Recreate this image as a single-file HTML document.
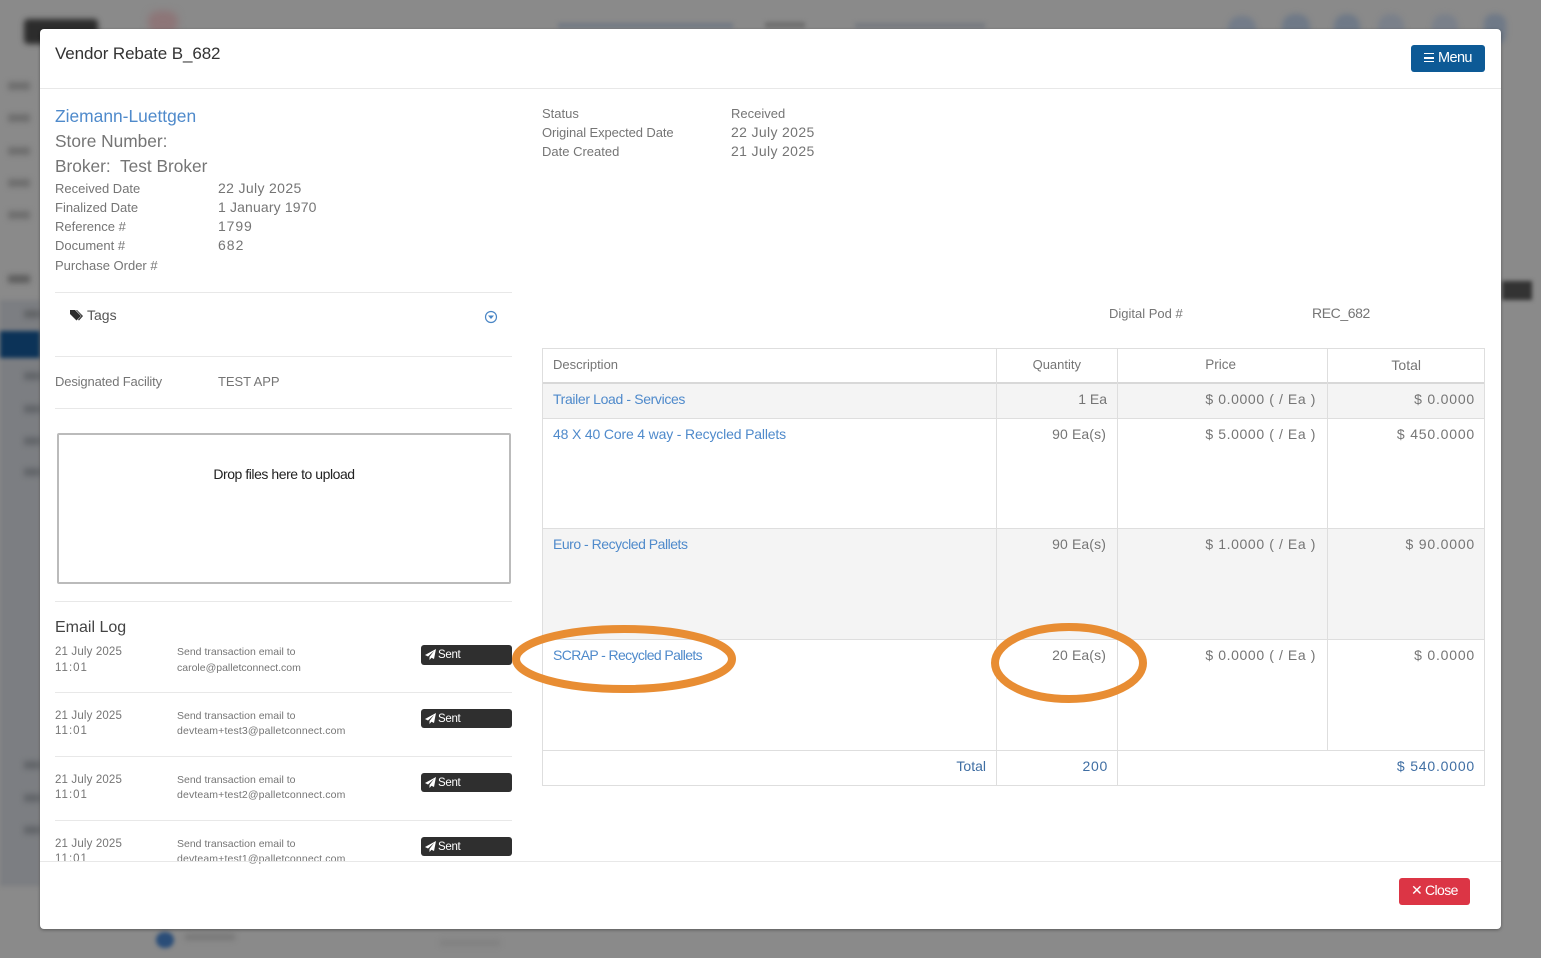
<!DOCTYPE html>
<html><head><meta charset="utf-8"><title>Vendor Rebate B_682</title>
<style>
html,body{margin:0;padding:0}
body{width:1541px;height:958px;overflow:hidden;position:relative;background:#8a8a8a;font-family:"Liberation Sans",sans-serif}
.b{position:absolute;filter:blur(3px)}
.modal{position:absolute;left:40px;top:29px;width:1461px;height:900px;background:#fff;border-radius:4px;overflow:hidden;box-shadow:0 1px 3px rgba(0,0,0,.35)}
.t{position:absolute;white-space:nowrap;line-height:18px;font-size:14px;color:#757575;transform:translateY(-50%)}
.r{transform:translate(-100%,-50%)}
.l{color:#4f8acb}
.h{position:absolute;height:1px;background:#e8e8e8}
.v{position:absolute;width:1px;background:#dedede}
.s{font-size:13px;transform:translateY(calc(-50% + 2px))}
.n{letter-spacing:.35px}
.d{font-size:11.5px;letter-spacing:.15px;transform:translateY(calc(-50% + 2px))}
.c{font-size:11.5px;letter-spacing:1px;transform:translateY(calc(-50% + 2px))}
.x{font-size:10.5px;letter-spacing:0;transform:translateY(calc(-50% + 2px))}
.m{font-size:10.5px;letter-spacing:.13px;transform:translateY(calc(-50% + 2px))}
.p{letter-spacing:.6px}
.a{letter-spacing:.8px}
.sent{position:absolute;left:381px;width:91px;height:19px;background:#2f2f2f;border-radius:3px;color:#fff;font-size:11.5px;line-height:19px}
.sent svg{position:absolute;left:4px;top:4px}
.sent span{position:absolute;left:17px;top:1px;letter-spacing:-.3px}
</style></head>
<body>
<div class="b" style="left:0;top:300px;width:40px;height:586px;background:#7c7e82;filter:blur(2px)"></div>
<div class="b" style="left:0;top:331px;width:40px;height:27px;background:#0c3358;filter:blur(2px)"></div>
<div class="b" style="left:24px;top:19px;width:74px;height:25px;background:#2c2c2c;border-radius:4px"></div>
<div class="b" style="left:148px;top:11px;width:30px;height:22px;background:#8d7577;border-radius:10px;filter:blur(4px)"></div>
<div class="b" style="left:558px;top:23px;width:175px;height:5px;background:#727984;filter:blur(2px)"></div>
<div class="b" style="left:765px;top:22px;width:40px;height:6px;background:#6f6f6f;filter:blur(2px)"></div>
<div class="b" style="left:855px;top:23px;width:130px;height:5px;background:#767a80;filter:blur(2px)"></div>
<div class="b" style="left:1228px;top:16px;width:28px;height:16px;background:#737c89;border-radius:12px 12px 0 0"></div>
<div class="b" style="left:1282px;top:14px;width:28px;height:18px;background:#6f7987;border-radius:12px 12px 0 0"></div>
<div class="b" style="left:1334px;top:14px;width:26px;height:18px;background:#6f7987;border-radius:12px 12px 0 0"></div>
<div class="b" style="left:1378px;top:14px;width:26px;height:18px;background:#7a808a;border-radius:12px 12px 0 0"></div>
<div class="b" style="left:1432px;top:14px;width:26px;height:18px;background:#7a808a;border-radius:12px 12px 0 0"></div>
<div class="b" style="left:1484px;top:14px;width:22px;height:30px;background:#6f7987;border-radius:9px"></div>
<div class="b" style="left:1502px;top:281px;width:30px;height:19px;background:#333;filter:blur(2px)"></div>
<div class="b" style="left:8px;top:82px;width:22px;height:8px;background:#6e6e6e"></div>
<div class="b" style="left:8px;top:114px;width:22px;height:8px;background:#6e6e6e"></div>
<div class="b" style="left:8px;top:147px;width:22px;height:8px;background:#6e6e6e"></div>
<div class="b" style="left:8px;top:179px;width:22px;height:8px;background:#6e6e6e"></div>
<div class="b" style="left:8px;top:211px;width:22px;height:8px;background:#6e6e6e"></div>
<div class="b" style="left:8px;top:275px;width:22px;height:8px;background:#5e5e5e"></div>
<div class="b" style="left:24px;top:310px;width:16px;height:8px;background:#626467"></div>
<div class="b" style="left:24px;top:372px;width:16px;height:8px;background:#626569"></div>
<div class="b" style="left:24px;top:405px;width:16px;height:8px;background:#626569"></div>
<div class="b" style="left:24px;top:437px;width:16px;height:8px;background:#626569"></div>
<div class="b" style="left:24px;top:468px;width:16px;height:8px;background:#626569"></div>
<div class="b" style="left:24px;top:761px;width:16px;height:8px;background:#626569"></div>
<div class="b" style="left:24px;top:794px;width:16px;height:8px;background:#626569"></div>
<div class="b" style="left:24px;top:826px;width:16px;height:8px;background:#626569"></div>
<div class="b" style="left:156px;top:932px;width:18px;height:16px;background:#2a4d78;border-radius:9px;filter:blur(2px)"></div>
<div class="b" style="left:185px;top:934px;width:50px;height:6px;background:#777"></div>
<div class="b" style="left:440px;top:940px;width:60px;height:6px;background:#808080"></div>

<div class="modal">
  <div class="t" style="left:15px;top:25px;font-size:17px;letter-spacing:-.1px;color:#333;line-height:24px">Vendor Rebate B_682</div>
  <div style="position:absolute;left:1371px;top:16px;width:74px;height:27px;background:#0d5a96;border-radius:3px;color:#fff;font-size:14.5px;line-height:26px;letter-spacing:-.6px"><span style="position:absolute;left:13px;top:8px;width:10px;height:9px;border-top:1.5px solid #fff;border-bottom:1.5px solid #fff;box-sizing:border-box"></span><span style="position:absolute;left:13px;top:12px;width:10px;height:1.5px;background:#fff"></span><span style="position:absolute;left:27px">Menu</span></div>
  <div class="h" style="left:0;top:59px;width:1461px"></div>

  <div class="t l" style="left:15px;top:87px;font-size:17.4px;line-height:24px">Ziemann-Luettgen</div>
  <div class="t" style="left:15px;top:112px;font-size:17.3px;line-height:24px">Store Number:</div>
  <div class="t" style="left:15px;top:137px;font-size:17.3px;line-height:24px">Broker:&nbsp; Test Broker</div>
  <div class="t s" style="left:15px;top:158px">Received Date</div><div class="t n" style="left:178px;top:159px">22 July 2025</div>
  <div class="t s" style="left:15px;top:177px">Finalized Date</div><div class="t" style="left:178px;top:178px;letter-spacing:.15px">1 January 1970</div>
  <div class="t s" style="left:15px;top:196px">Reference #</div><div class="t" style="left:178px;top:197px;letter-spacing:.9px">1799</div>
  <div class="t s" style="left:15px;top:215px">Document #</div><div class="t" style="left:178px;top:216px;letter-spacing:1px">682</div>
  <div class="t s" style="left:15px;top:235px">Purchase Order #</div>
  <div class="h" style="left:15px;top:263px;width:457px"></div>
  <svg style="position:absolute;left:30px;top:281px" width="14" height="11" viewBox="0 0 14 11"><path d="M0 0h5l6 6-4.500 4.500L0 4z" fill="#2b2b2b"/><path d="M7 0l6 6-4 4.500-1-.8L11.500 6 6 0z" fill="#2b2b2b"/></svg>
  <div class="t s" style="left:47px;top:284px;color:#555;font-size:14px">Tags</div>
  <svg style="position:absolute;left:444px;top:281px" width="14" height="14" viewBox="0 0 14 14"><circle cx="7" cy="7" r="5.500" fill="none" stroke="#4a86c5" stroke-width="1.200"/><path d="M4 5.500h6L7 9z" fill="#4a86c5"/></svg>
  <div class="h" style="left:15px;top:327px;width:457px"></div>
  <div class="t s" style="left:15px;top:351px;letter-spacing:-.15px">Designated Facility</div>
  <div class="t s" style="left:178px;top:351px;letter-spacing:-.05px">TEST APP</div>
  <div class="h" style="left:15px;top:379px;width:457px"></div>
  <div style="position:absolute;left:17px;top:404px;width:454px;height:151px;box-sizing:border-box;border:2px solid #bbb;border-radius:2px"></div>
  <div class="t" style="left:17px;top:445px;width:454px;text-align:center;color:#222;letter-spacing:-.45px">Drop files here to upload</div>
  <div class="h" style="left:15px;top:572px;width:457px"></div>
  <div class="t" style="left:15px;top:599px;font-size:16px;color:#444;line-height:22px">Email Log</div>

  <div class="t d" style="left:15px;top:621px">21 July 2025</div><div class="t c" style="left:15px;top:637px">11:01</div>
  <div class="t x" style="left:137px;top:621px">Send transaction email to</div><div class="t x" style="left:137px;top:637px">carole@palletconnect.com</div>
  <div class="sent" style="top:616px;height:20px"><svg width="11" height="11" viewBox="0 0 11 11"><path d="M11 0L0 6l3 1.500L9 2 4.500 8v3l2-2.300 2.500 1.300z" fill="#fff"/></svg><span>Sent</span></div>
  <div class="h" style="left:15px;top:663px;width:457px"></div>

  <div class="t d" style="left:15px;top:685px">21 July 2025</div><div class="t c" style="left:15px;top:700px">11:01</div>
  <div class="t x" style="left:137px;top:685px">Send transaction email to</div><div class="t m" style="left:137px;top:700px">devteam+test3@palletconnect.com</div>
  <div class="sent" style="top:680px"><svg width="11" height="11" viewBox="0 0 11 11"><path d="M11 0L0 6l3 1.500L9 2 4.500 8v3l2-2.300 2.500 1.300z" fill="#fff"/></svg><span>Sent</span></div>
  <div class="h" style="left:15px;top:727px;width:457px"></div>

  <div class="t d" style="left:15px;top:749px">21 July 2025</div><div class="t c" style="left:15px;top:764px">11:01</div>
  <div class="t x" style="left:137px;top:749px">Send transaction email to</div><div class="t m" style="left:137px;top:764px">devteam+test2@palletconnect.com</div>
  <div class="sent" style="top:744px"><svg width="11" height="11" viewBox="0 0 11 11"><path d="M11 0L0 6l3 1.500L9 2 4.500 8v3l2-2.300 2.500 1.300z" fill="#fff"/></svg><span>Sent</span></div>
  <div class="h" style="left:15px;top:791px;width:457px"></div>

  <div class="t d" style="left:15px;top:813px">21 July 2025</div><div class="t c" style="left:15px;top:828px">11:01</div>
  <div class="t x" style="left:137px;top:813px">Send transaction email to</div><div class="t m" style="left:137px;top:828px">devteam+test1@palletconnect.com</div>
  <div class="sent" style="top:808px"><svg width="11" height="11" viewBox="0 0 11 11"><path d="M11 0L0 6l3 1.500L9 2 4.500 8v3l2-2.300 2.500 1.300z" fill="#fff"/></svg><span>Sent</span></div>

  <div class="t s" style="left:502px;top:83px">Status</div><div class="t s" style="left:691px;top:83px">Received</div>
  <div class="t s" style="left:502px;top:102px;letter-spacing:-.1px">Original Expected Date</div><div class="t n" style="left:691px;top:103px">22 July 2025</div>
  <div class="t s" style="left:502px;top:121px">Date Created</div><div class="t n" style="left:691px;top:122px">21 July 2025</div>
  <div class="t s" style="left:1069px;top:283px">Digital Pod #</div><div class="t" style="left:1272px;top:284px;letter-spacing:-.4px">REC_682</div>

  <div style="position:absolute;left:503px;top:355px;width:942px;height:34px;background:#f4f4f4"></div>
  <div style="position:absolute;left:503px;top:500px;width:942px;height:110px;background:#f4f4f4"></div>
  <div class="h" style="left:502px;top:319px;width:943px;background:#dedede"></div>
  <div class="h" style="left:502px;top:353px;width:943px;background:#d8d8d8;height:2px"></div>
  <div class="h" style="left:502px;top:389px;width:943px;background:#dedede"></div>
  <div class="h" style="left:502px;top:499px;width:943px;background:#dedede"></div>
  <div class="h" style="left:502px;top:610px;width:943px;background:#dedede"></div>
  <div class="h" style="left:502px;top:721px;width:943px;background:#dedede"></div>
  <div class="h" style="left:502px;top:756px;width:943px;background:#dedede"></div>
  <div class="v" style="left:502px;top:319px;height:438px"></div>
  <div class="v" style="left:956px;top:319px;height:438px"></div>
  <div class="v" style="left:1077px;top:319px;height:438px"></div>
  <div class="v" style="left:1287px;top:319px;height:402px"></div>
  <div class="v" style="left:1444px;top:319px;height:438px"></div>

  <div class="t" style="left:513px;top:336px;font-size:13px">Description</div>
  <div class="t r" style="left:1041px;top:336px;font-size:13px">Quantity</div>
  <div class="t r" style="left:1196px;top:336px;font-size:13.5px">Price</div>
  <div class="t r" style="left:1381px;top:336px;font-size:14px">Total</div>

  <div class="t l" style="left:513px;top:370px;letter-spacing:-.36px">Trailer Load - Services</div>
  <div class="t r" style="left:1067px;top:370px">1 Ea</div>
  <div class="t r p" style="left:1276px;top:370px">$ 0.0000 ( / Ea )</div>
  <div class="t r a" style="left:1435px;top:370px">$ 0.0000</div>

  <div class="t l" style="left:513px;top:405px;letter-spacing:-.16px">48 X 40 Core 4 way - Recycled Pallets</div>
  <div class="t r" style="left:1066px;top:405px;letter-spacing:.12px">90 Ea(s)</div>
  <div class="t r p" style="left:1276px;top:405px">$ 5.0000 ( / Ea )</div>
  <div class="t r a" style="left:1435px;top:405px">$ 450.0000</div>

  <div class="t l" style="left:513px;top:515px;letter-spacing:-.48px">Euro - Recycled Pallets</div>
  <div class="t r" style="left:1066px;top:515px;letter-spacing:.12px">90 Ea(s)</div>
  <div class="t r p" style="left:1276px;top:515px">$ 1.0000 ( / Ea )</div>
  <div class="t r a" style="left:1435px;top:515px">$ 90.0000</div>

  <div class="t l" style="left:513px;top:626px;letter-spacing:-.62px">SCRAP - Recycled Pallets</div>
  <div class="t r" style="left:1066px;top:626px;letter-spacing:.12px">20 Ea(s)</div>
  <div class="t r p" style="left:1276px;top:626px">$ 0.0000 ( / Ea )</div>
  <div class="t r a" style="left:1435px;top:626px">$ 0.0000</div>

  <div class="t r" style="left:946px;top:737px;color:#3f6ea3">Total</div>
  <div class="t r" style="left:1068px;top:737px;color:#3f6ea3;letter-spacing:.7px">200</div>
  <div class="t r a" style="left:1435px;top:737px;color:#3f6ea3">$ 540.0000</div>

  <div class="h" style="left:0;top:832px;width:1461px"></div>
  <div style="position:absolute;left:1359px;top:849px;width:71px;height:27px;background:#dc3545;border-radius:3px;color:#fff;font-size:14px;line-height:25px;letter-spacing:-.6px"><span style="position:absolute;left:12px">✕</span><span style="position:absolute;left:26px">Close</span></div>
</div>

<svg style="position:absolute;left:0;top:0;pointer-events:none" width="1541" height="958">
  <ellipse cx="624" cy="659" rx="108" ry="30" fill="none" stroke="#e88d33" stroke-width="8"/>
  <ellipse cx="1069" cy="663" rx="74" ry="36" fill="none" stroke="#e88d33" stroke-width="8"/>
</svg>
</body></html>
